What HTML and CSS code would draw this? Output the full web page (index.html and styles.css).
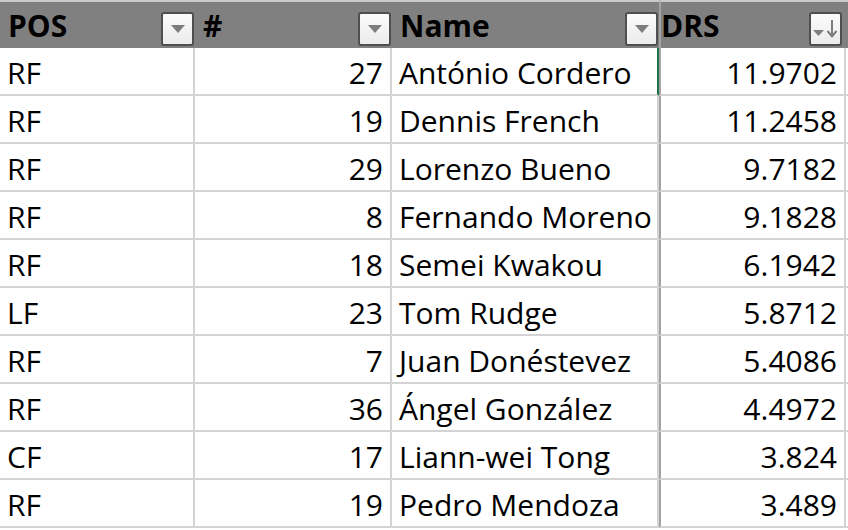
FILE: index.html
```html
<!DOCTYPE html>
<html>
<head>
<meta charset="utf-8">
<link rel="stylesheet" href="styles.css">
</head>
<body>
<div class="sheet">
  <div class="hcell"><span class="htext">POS</span><span class="filter"><svg width="14" height="8" viewBox="0 0 14 8"><path d="M0 0H14L7 8Z" fill="#7d7d7d"/></svg></span></div>
  <div class="hcell"><span class="htext">#</span><span class="filter"><svg width="14" height="8" viewBox="0 0 14 8"><path d="M0 0H14L7 8Z" fill="#7d7d7d"/></svg></span></div>
  <div class="hcell"><span class="htext">Name</span><span class="filter"><svg width="14" height="8" viewBox="0 0 14 8"><path d="M0 0H14L7 8Z" fill="#7d7d7d"/></svg></span></div>
  <div class="hcell freeze"><span class="htext">DRS</span><span class="filter"><svg width="28" height="20" viewBox="0 0 28 20"><path d="M1 11H12L6.5 17Z" fill="#7d7d7d"/><path d="M20 1V17M15.5 12L20 17.5L24.5 12" fill="none" stroke="#7d7d7d" stroke-width="2"/></svg></span></div>
  <div class="hcell last"></div>

  <div class="cell">RF</div><div class="cell num">27</div><div class="cell sel">António Cordero</div><div class="cell num freeze">11.9702</div><div class="cell last"></div>
  <div class="cell">RF</div><div class="cell num">19</div><div class="cell">Dennis French</div><div class="cell num freeze">11.2458</div><div class="cell last"></div>
  <div class="cell">RF</div><div class="cell num">29</div><div class="cell">Lorenzo Bueno</div><div class="cell num freeze">9.7182</div><div class="cell last"></div>
  <div class="cell">RF</div><div class="cell num">8</div><div class="cell">Fernando Moreno</div><div class="cell num freeze">9.1828</div><div class="cell last"></div>
  <div class="cell">RF</div><div class="cell num">18</div><div class="cell">Semei Kwakou</div><div class="cell num freeze">6.1942</div><div class="cell last"></div>
  <div class="cell">LF</div><div class="cell num">23</div><div class="cell">Tom Rudge</div><div class="cell num freeze">5.8712</div><div class="cell last"></div>
  <div class="cell">RF</div><div class="cell num">7</div><div class="cell">Juan Donéstevez</div><div class="cell num freeze">5.4086</div><div class="cell last"></div>
  <div class="cell">RF</div><div class="cell num">36</div><div class="cell">Ángel González</div><div class="cell num freeze">4.4972</div><div class="cell last"></div>
  <div class="cell">CF</div><div class="cell num">17</div><div class="cell">Liann-wei Tong</div><div class="cell num freeze">3.824</div><div class="cell last"></div>
  <div class="cell">RF</div><div class="cell num">19</div><div class="cell">Pedro Mendoza</div><div class="cell num freeze">3.489</div><div class="cell last"></div>
</div>
</body>
</html>
```

FILE: styles.css
```css
html, body {
  margin: 0;
  padding: 0;
  background: #ffffff;
}
.sheet {
  display: grid;
  grid-template-columns: 195px 197px 267px 187px 2px;
  grid-auto-rows: 48px;
  font-family: "Open Sans", "Liberation Sans", sans-serif;
  font-size: 30px;
  color: #000;
  overflow: hidden;
  width: 848px;
}
.hcell {
  background: #808080;
  border-top: 2px solid #c9c9c9;
  display: flex;
  align-items: flex-start;
  justify-content: space-between;
  padding: 0 1px 0 8px;
  font-weight: bold;
  box-sizing: border-box;
}
.hcell.freeze {
  border-left: 2px solid #a3a3a3;
  padding-left: 0;
}
.htext {
  line-height: 30px;
  margin-top: 9px;
}
.filter {
  width: 29px;
  height: 30px;
  margin-top: 10px;
  border: 2px solid #4f4f4f;
  border-radius: 3px;
  background: linear-gradient(#fbfbfb, #ececec);
  display: flex;
  align-items: center;
  justify-content: center;
}
.hcell.freeze .filter {
  margin-right: 3px;
}
.cell {
  border-right: 2px solid #d4d4d4;
  border-bottom: 2px solid #d4d4d4;
  box-sizing: border-box;
  padding: 3px 7px 0 7px;
  display: flex;
  align-items: center;
  white-space: nowrap;
  overflow: hidden;
}
.cell.num {
  justify-content: flex-end;
}
.cell.freeze {
  border-left: 2px solid #a3a3a3;
}
.cell.sel {
  border-right: 2px solid #217346;
}
.cell.last {
  border-right: none;
  padding: 0;
}
.hcell.last {
  padding: 0;
}
```
